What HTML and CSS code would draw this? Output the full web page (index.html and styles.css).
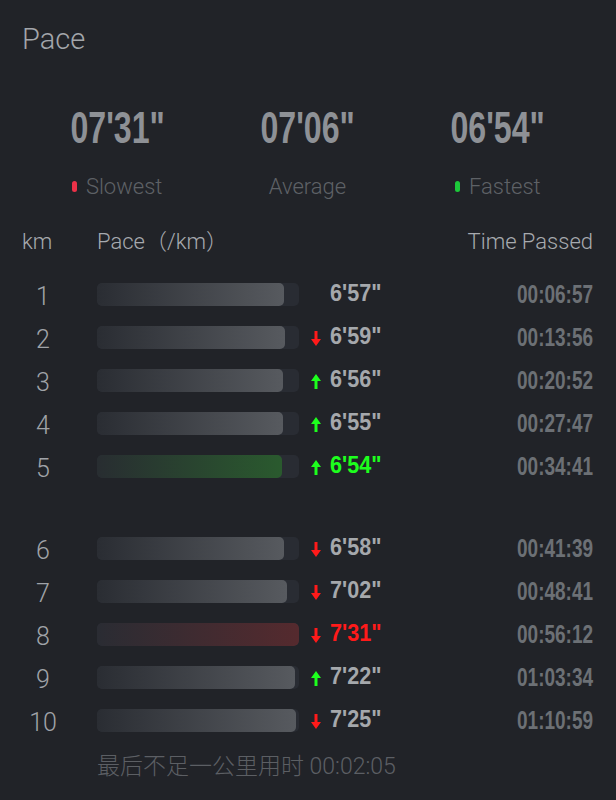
FILE: index.html
```html
<!DOCTYPE html>
<html lang="zh-CN">
<head>
    <meta charset="UTF-8">
    <meta name="viewport" content="width=device-width, initial-scale=1.0">
    <title>Pace</title>
    <link rel="stylesheet" href="styles.css">
</head>
<body>
    <div class="page">
        <h1 class="title">Pace</h1>

        <!-- summary -->
        <div class="stats">
            <div class="stat">
                <div class="stat-value"><span class="num">07'31"</span></div>
                <div class="stat-label"><i class="dot dot-red"></i>Slowest</div>
            </div>
            <div class="stat">
                <div class="stat-value"><span class="num">07'06"</span></div>
                <div class="stat-label">Average</div>
            </div>
            <div class="stat">
                <div class="stat-value"><span class="num">06'54"</span></div>
                <div class="stat-label"><i class="dot dot-green"></i>Fastest</div>
            </div>
        </div>

        <!-- table header -->
        <div class="head">
            <span class="head-km">km</span>
            <span class="head-pace">Pace（/km）</span>
            <span class="head-time">Time Passed</span>
        </div>

        <div class="rows">
            <div class="row">
                <span class="km">1</span>
                <div class="track"><div class="fill" style="width: 92.5%"></div></div>
                <span class="arrow"></span>
                <span class="pace"><span class="num">6'57"</span></span>
                <span class="time"><span class="num">00:06:57</span></span>
            </div>
            <div class="row">
                <span class="km">2</span>
                <div class="track"><div class="fill" style="width: 93%"></div></div>
                <span class="arrow"><svg width="10" height="15" viewBox="0 0 10 15"><polygon class="down" points="3.5,0 6.5,0 6.5,8 10,8 5,15 0,8 3.5,8"/></svg></span>
                <span class="pace"><span class="num">6'59"</span></span>
                <span class="time"><span class="num">00:13:56</span></span>
            </div>
            <div class="row">
                <span class="km">3</span>
                <div class="track"><div class="fill" style="width: 92.2%"></div></div>
                <span class="arrow"><svg width="10" height="15" viewBox="0 0 10 15"><polygon class="up" points="5,0 10,7 6.5,7 6.5,15 3.5,15 3.5,7 0,7"/></svg></span>
                <span class="pace"><span class="num">6'56"</span></span>
                <span class="time"><span class="num">00:20:52</span></span>
            </div>
            <div class="row">
                <span class="km">4</span>
                <div class="track"><div class="fill" style="width: 92%"></div></div>
                <span class="arrow"><svg width="10" height="15" viewBox="0 0 10 15"><polygon class="up" points="5,0 10,7 6.5,7 6.5,15 3.5,15 3.5,7 0,7"/></svg></span>
                <span class="pace"><span class="num">6'55"</span></span>
                <span class="time"><span class="num">00:27:47</span></span>
            </div>
            <div class="row row-fast">
                <span class="km">5</span>
                <div class="track"><div class="fill" style="width: 91.8%"></div></div>
                <span class="arrow"><svg width="10" height="15" viewBox="0 0 10 15"><polygon class="up" points="5,0 10,7 6.5,7 6.5,15 3.5,15 3.5,7 0,7"/></svg></span>
                <span class="pace"><span class="num">6'54"</span></span>
                <span class="time"><span class="num">00:34:41</span></span>
            </div>

            <div class="row row-gap">
                <span class="km">6</span>
                <div class="track"><div class="fill" style="width: 92.7%"></div></div>
                <span class="arrow"><svg width="10" height="15" viewBox="0 0 10 15"><polygon class="down" points="3.5,0 6.5,0 6.5,8 10,8 5,15 0,8 3.5,8"/></svg></span>
                <span class="pace"><span class="num">6'58"</span></span>
                <span class="time"><span class="num">00:41:39</span></span>
            </div>
            <div class="row">
                <span class="km">7</span>
                <div class="track"><div class="fill" style="width: 94%"></div></div>
                <span class="arrow"><svg width="10" height="15" viewBox="0 0 10 15"><polygon class="down" points="3.5,0 6.5,0 6.5,8 10,8 5,15 0,8 3.5,8"/></svg></span>
                <span class="pace"><span class="num">7'02"</span></span>
                <span class="time"><span class="num">00:48:41</span></span>
            </div>
            <div class="row row-slow">
                <span class="km">8</span>
                <div class="track"><div class="fill" style="width: 100%"></div></div>
                <span class="arrow"><svg width="10" height="15" viewBox="0 0 10 15"><polygon class="down" points="3.5,0 6.5,0 6.5,8 10,8 5,15 0,8 3.5,8"/></svg></span>
                <span class="pace"><span class="num">7'31"</span></span>
                <span class="time"><span class="num">00:56:12</span></span>
            </div>
            <div class="row">
                <span class="km">9</span>
                <div class="track"><div class="fill" style="width: 98%"></div></div>
                <span class="arrow"><svg width="10" height="15" viewBox="0 0 10 15"><polygon class="up" points="5,0 10,7 6.5,7 6.5,15 3.5,15 3.5,7 0,7"/></svg></span>
                <span class="pace"><span class="num">7'22"</span></span>
                <span class="time"><span class="num">01:03:34</span></span>
            </div>
            <div class="row">
                <span class="km">10</span>
                <div class="track"><div class="fill" style="width: 98.7%"></div></div>
                <span class="arrow"><svg width="10" height="15" viewBox="0 0 10 15"><polygon class="down" points="3.5,0 6.5,0 6.5,8 10,8 5,15 0,8 3.5,8"/></svg></span>
                <span class="pace"><span class="num">7'25"</span></span>
                <span class="time"><span class="num">01:10:59</span></span>
            </div>
        </div>

        <p class="rest">最后不足一公里用时 00:02:05</p>
    </div>
</body>
</html>
```

FILE: styles.css
```css
body {
    margin: 0;
    background-color: #212328;
    font-family: Roboto, "Noto Sans CJK SC", sans-serif;
    font-weight: 300;
}

.page {
    padding: 0 23px 0 22px;
}

.title {
    margin: 0;
    padding-top: 22px;
    font-size: 29px;
    font-weight: 300;
    line-height: 34px;
    color: #a3a6ab;
}

/* condensed digits */
.num {
    display: inline-block;
    font-family: "Liberation Sans", sans-serif;
    font-weight: 700;
}

.stats {
    display: grid;
    grid-template-columns: repeat(3, 1fr);
    margin-top: 47px;
}

.stat {
    text-align: center;
}

.stat-value {
    font-size: 44px;
    line-height: 50px;
    color: #8e9196;
}

.stat-value .num {
    transform: scaleX(0.73);
}

.stat-label {
    margin-top: 21px;
    font-size: 22px;
    line-height: 26px;
    color: #5e6166;
}

.dot {
    display: inline-block;
    width: 5px;
    height: 11px;
    border-radius: 3px;
    margin-right: 9px;
    vertical-align: 2px;
}

.dot-red {
    background-color: #ec3148;
}

.dot-green {
    background-color: #1cc93a;
}

.head {
    display: flex;
    align-items: center;
    margin-top: 27px;
    font-size: 22px;
    line-height: 30px;
    color: #a7aaaf;
}

.head-km {
    width: 75px;
}

.head-pace {
    flex: 1;
}

.rows {
    margin-top: 16px;
}

.row {
    display: grid;
    grid-template-columns: 42px 235px 31px 1fr auto;
    align-items: center;
    height: 43px;
}

.row-gap {
    margin-top: 39px;
}

.km {
    text-align: center;
    font-size: 25px;
    color: #a0a3a8;
    padding-top: 4px;
}

.track {
    margin-left: 33px;
    width: 202px;
    height: 23px;
    border-radius: 5px;
    background-color: #292c33;
    overflow: hidden;
}

.fill {
    height: 100%;
    border-radius: 5px;
    background: linear-gradient(to right, #2a2d33, #575a5f);
}

.row-fast .fill {
    background: linear-gradient(to right, #282d31, #2a5a2e);
}

.row-slow .fill {
    background: linear-gradient(to right, #2a2c33, #552a2e);
}

.arrow {
    justify-self: start;
    margin-left: 12px;
    padding-top: 1px;
}

.arrow svg {
    display: block;
}

.up {
    fill: #1dff1d;
}

.down {
    fill: #ff1a1a;
}

.pace {
    font-size: 24px;
    color: #a5a8ac;
    padding-bottom: 3px;
}

.pace .num {
    transform: scaleX(0.9);
    transform-origin: left center;
}

.row-fast .pace {
    color: #1dff1d;
}

.row-slow .pace {
    color: #ff1a1a;
}

.time {
    font-size: 25px;
    color: #6c7075;
    text-align: right;
}

.time .num {
    transform: scaleX(0.76);
    transform-origin: right center;
}

.rest {
    margin: 10px 0 0 75px;
    font-size: 23px;
    line-height: 30px;
    color: #5c5f64;
}
```
